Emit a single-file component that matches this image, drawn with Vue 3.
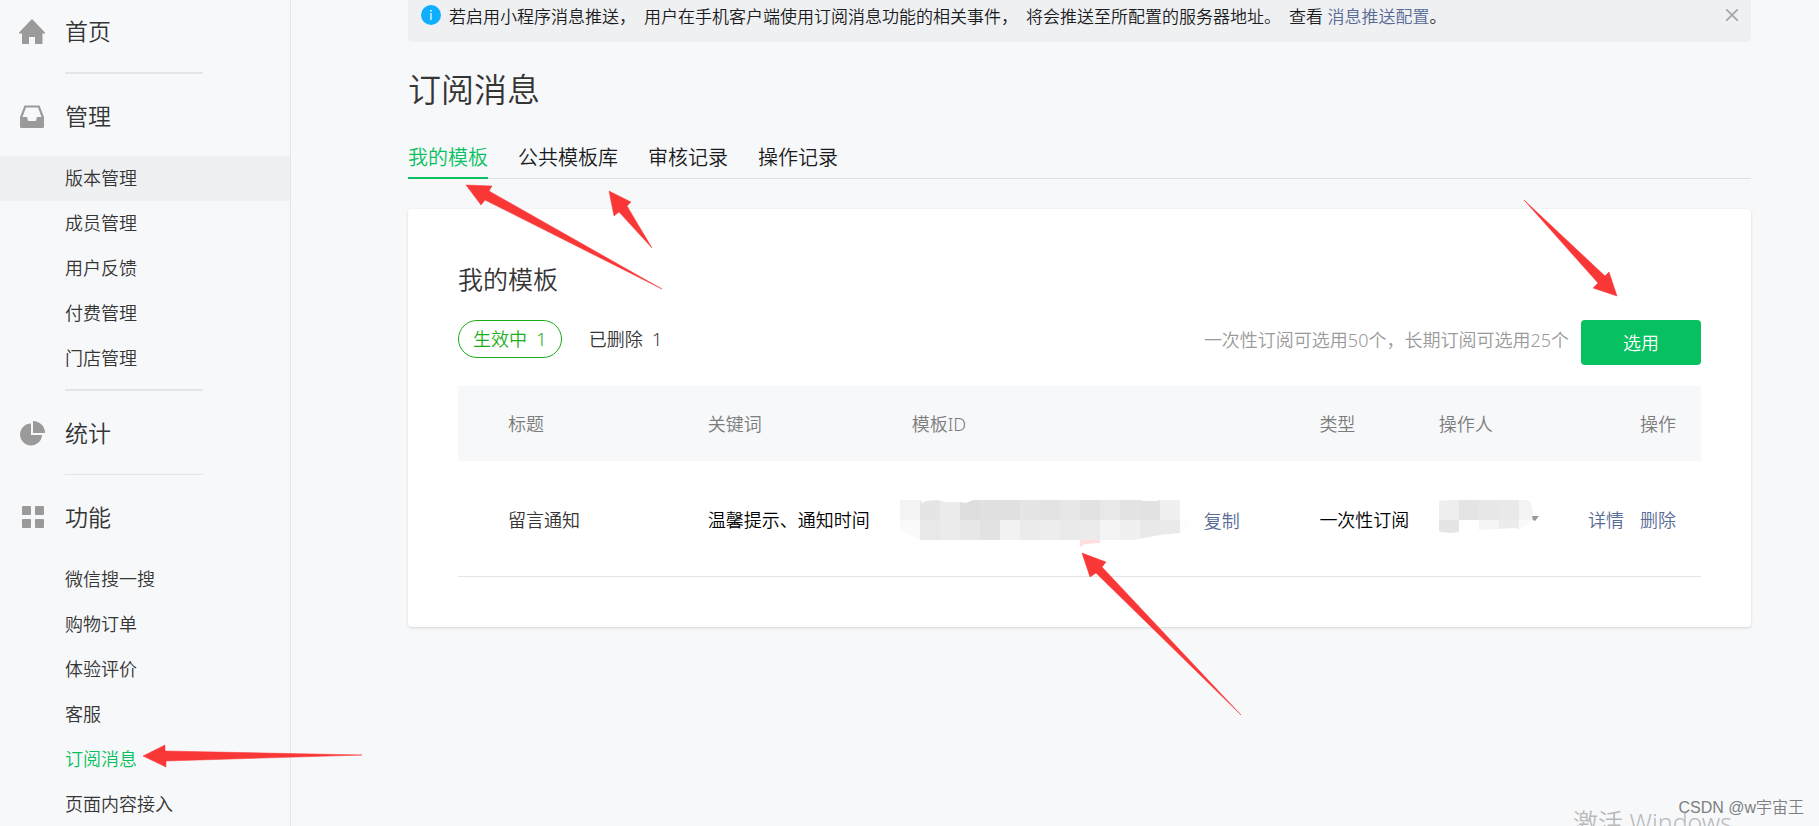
<script setup>
import { ref } from 'vue'

const manageItems = ['版本管理', '成员管理', '用户反馈', '付费管理', '门店管理']
const featureItems = ['微信搜一搜', '购物订单', '体验评价', '客服', '订阅消息', '页面内容接入']
const tabs = ['我的模板', '公共模板库', '审核记录', '操作记录']
const activeTab = ref('我的模板')

// Grey levels of the two rows of tiles over the obscured template ID
const rowOne = [243, 229, 235, 222, 225, 224, 229, 227, 231, 226, 232, 227, 226, 240]
const rowTwo = [250, 232, 235, 231, 226, 242, 235, 237, 234, 235, 244, 240, 233, 234]
const idTiles = [
  ...rowOne.map((g, i) => ({ x: i * 20, y: 0, g })),
  ...rowTwo.map((g, i) => ({ x: i * 20, y: 20, g })),
]
const grey = (g) => `rgb(${g},${g},${g})`

const arrows = [
  '466,185 492,186 489,191 662,289 485,200 481,205',
  '609,191 631,202 627,206 652,248 619,212 614,216',
  '1617,296 1609,272 1605,276 1524,200 1598,283 1593,288',
  '1082,553 1106,562 1102,567 1241,715 1096,573 1090,577',
  '143,756 165,745 165,751 362,755 166,761 166,767',
]
</script>

<template>
  <div class="shell">
    <aside class="sidebar">
      <nav class="nav">
        <a class="head" href="#">
          <svg class="icon" viewBox="0 0 26 26"><path fill="#9a9a9a" d="M13 1 26 14.500V15.500H23.500V26H16V19H10V26H3V15.500H0V14.500Z" /></svg>
          首页
        </a>
        <hr class="rule tight" />
        <a class="head" href="#">
          <svg class="icon" viewBox="0 0 26 26"><path fill="#9a9a9a" fill-rule="evenodd" d="M5.500 2.500H20.500L25 14V23.500Q25 25 23.500 25H2.500Q1 25 1 23.500V14ZM7 4.500 3.500 14H8L9 18H17L18 14H22.500L19 4.500Z" /></svg>
          管理
        </a>
        <a v-for="(item, i) in manageItems" :key="item" href="#" class="item" :class="{ hover: i === 0 }">{{ item }}</a>
        <hr class="rule" />
        <a class="head" href="#">
          <svg class="icon" viewBox="0 0 26 26"><path fill="#9a9a9a" d="M12 3.500V15H23A11 11 0 1 1 12 3.500ZM14 1A12 12 0 0 1 26 13H14Z" /></svg>
          统计
        </a>
        <hr class="rule tight thin" />
        <a class="head" href="#">
          <svg class="icon" viewBox="0 0 26 26"><g fill="#9a9a9a"><rect x="3" y="2" width="9" height="9" rx="1" /><rect x="16" y="2" width="9" height="9" rx="1" /><rect x="3" y="15" width="9" height="9" rx="1" /><rect x="16" y="15" width="9" height="9" rx="1" /></g></svg>
          功能
        </a>
        <a v-for="item in featureItems" :key="item" href="#" class="item" :class="{ current: item === '订阅消息' }">{{ item }}</a>
      </nav>
    </aside>

    <main class="main">
      <div class="notice">
        <svg class="info" viewBox="0 0 20 20"><circle cx="10" cy="10" r="10" fill="#10aeff" /><path fill="#fff" d="M9.400 8h1.200v7H9.400zM9.200 5h1.600v1.600H9.200z" /></svg>
        <p class="notice-text">
          <span>若启用小程序消息推送，</span>
          <span>用户在手机客户端使用订阅消息功能的相关事件，</span>
          <span>将会推送至所配置的服务器地址。</span>
          <span>查看 <a class="link" href="#">消息推送配置</a>。</span>
        </p>
        <button class="close" type="button" aria-label="关闭">
          <svg viewBox="0 0 12 12"><path d="M0 0 12 12M12 0 0 12" stroke="#a3a4a6" stroke-width="1.600" /></svg>
        </button>
      </div>

      <h1 class="title">订阅消息</h1>

      <div class="tabs">
        <button v-for="tab in tabs" :key="tab" type="button" class="tab" :class="{ active: tab === activeTab }" @click="activeTab = tab">{{ tab }}</button>
      </div>

      <section class="card">
        <h2 class="subtitle">我的模板</h2>
        <div class="toolbar">
          <button type="button" class="pill on">生效中&nbsp; 1</button>
          <button type="button" class="pill">已删除&nbsp; 1</button>
          <span class="hint">一次性订阅可选用50个，长期订阅可选用25个</span>
          <button type="button" class="primary">选用</button>
        </div>

        <table class="table">
          <colgroup>
            <col class="c-title" /><col class="c-words" /><col class="c-id" /><col class="c-type" /><col /><col />
          </colgroup>
          <thead>
            <tr><th>标题</th><th>关键词</th><th>模板ID</th><th>类型</th><th>操作人</th><th>操作</th></tr>
          </thead>
          <tbody>
            <tr>
              <td>留言通知</td>
              <td class="strong">温馨提示、通知时间</td>
              <td>
                <div class="id-cell">
                  <svg class="id-mask" viewBox="0 0 292 48">
                    <clipPath id="id-shape"><path d="M1 0H20L23 3 26 1 37 0 45 2 60 2 66 3 73 0H240L244 1H258V0H279L280 1V33L260 35 234 40H20L0 30V1Z" /></clipPath>
                    <path d="M280 20h12q-1 8-12 12z" fill="#fdfdfd" />
                    <g clip-path="url(#id-shape)" shape-rendering="crispEdges">
                      <rect v-for="t in idTiles" :key="`${t.x}-${t.y}`" :x="t.x" :y="t.y" width="20" height="20" :fill="grey(t.g)" />
                    </g>
                    <path d="M180 40h20v3l-15 1-3 2-2 1z" fill="#ffdedd" />
                  </svg>
                  <a class="link" href="#">复制</a>
                </div>
              </td>
              <td class="strong">一次性订阅</td>
              <td>
                <svg class="user-mask" viewBox="0 0 102 40">
                  <path d="M0 1 12 0H20V20H0Z" fill="#eee" />
                  <path d="M0 20h20v12l-8 1-10-1-2-1z" fill="#e5e5e5" />
                  <path d="M20 0h20v20H20z" fill="#e4e4e4" />
                  <path d="M40 0h20v20H40z" fill="#e7e7e7" />
                  <path d="M60 0h20v20H60z" fill="#e9e9e9" />
                  <path d="M80 0h9q4 3 5 12v8H80z" fill="#f3f3f3" />
                  <path d="M40 20h20v9l-20 1z" fill="#f5f5f5" />
                  <path d="M60 20h20v9l-5-1-15 1z" fill="#ececec" />
                  <path d="M80 20h13q-4 6-13 9z" fill="#fafafa" />
                  <path d="M93 16h7l-4 5-2-1z" fill="#999" />
                </svg>
              </td>
              <td class="actions"><a class="link" href="#">详情</a><a class="link" href="#">删除</a></td>
            </tr>
          </tbody>
        </table>
      </section>
    </main>

    <svg class="marks" width="1819" height="826" aria-hidden="true">
      <polygon v-for="points in arrows" :key="points" :points="points" fill="#fa3737" stroke="#fa3737" stroke-width="0.500" />
    </svg>
    <div class="activate">激活 Windows</div>
    <div class="credit">CSDN @w宇宙王</div>
  </div>
</template>

<style>
body {
  margin: 0;
  background: #f7f8fa;
}
</style>

<style scoped>
.shell {
  position: relative;
  display: flex;
  height: 100vh;
  overflow: hidden;
  background: #f7f8fa;
  color: #353535;
  font-family: "Noto Sans", "Noto Sans CJK SC", sans-serif;
  font-size: 18px;
  font-weight: 350;
  line-height: 24px;
}
a {
  color: inherit;
  text-decoration: none;
}
button {
  margin: 0;
  padding: 0;
  border: 0;
  background: none;
  color: inherit;
  font: inherit;
  cursor: pointer;
}
.sidebar {
  flex: none;
  width: 290px;
  border-right: 1px solid #e4e5e7;
}
.nav {
  margin-top: -7px;
}
.head {
  display: flex;
  align-items: center;
  gap: 20px;
  height: 76px;
  padding: 0 0 2px 19px;
  font-size: 23px;
}
.icon {
  flex: none;
  width: 26px;
  height: 26px;
}
.rule {
  width: 138px;
  height: 2px;
  margin: 8px 0 4px 65px;
  border: 0;
  background: #e4e5e7;
}
.rule.tight {
  margin-top: 1px;
}
.rule.thin {
  height: 1px;
}
.item {
  display: block;
  padding-left: 65px;
  line-height: 45px;
}
.item.hover {
  background: #eff0f2;
}
.item.current {
  color: #07c160;
}
.link {
  color: #576b95;
}
.main {
  flex: 1;
  min-width: 0;
  padding: 0 68px 0 117px;
}
.notice {
  display: flex;
  align-items: flex-start;
  height: 37px;
  padding: 5px 13px 0;
  border-radius: 0 0 4px 4px;
  background: #eff0f2;
  color: #1a1b1c;
  font-size: 17px;
}
.info {
  flex: none;
  width: 20px;
  height: 20px;
}
.notice-text {
  display: flex;
  flex: 1;
  gap: 8px;
  margin: 0 0 0 8px;
  white-space: nowrap;
}
.close {
  display: flex;
  padding: 4px 0;
}
.close svg {
  width: 12px;
  height: 12px;
}
.title {
  margin: 24px 0 0;
  font-size: 33px;
  font-weight: inherit;
  line-height: 48px;
}
.tabs {
  display: flex;
  gap: 30px;
  margin-top: 24px;
  border-bottom: 1px solid #dfe0e3;
  color: #1a1b1c;
  font-size: 20px;
}
.tab {
  height: 41px;
  margin-bottom: -1px;
  border-bottom: 2px solid transparent;
}
.tab.active {
  border-color: #07c160;
  color: #07c160;
}
.card {
  margin-top: 30px;
  padding: 50px;
  border-radius: 4px;
  background: #fff;
  box-shadow: 0 1px 3px rgba(0, 0, 0, 0.14);
}
.subtitle {
  margin: 0;
  font-size: 25px;
  font-weight: inherit;
  line-height: 40px;
}
.toolbar {
  display: flex;
  align-items: flex-start;
  margin-top: 21px;
}
.pill {
  height: 38px;
  padding: 0 14px;
  border: 1px solid transparent;
  border-radius: 19px;
}
.pill.on {
  margin-right: 12px;
  border-color: #1aad19;
  color: #1aad19;
}
.hint {
  margin-left: auto;
  color: #9a9a9a;
  line-height: 40px;
}
.primary {
  width: 120px;
  height: 45px;
  margin-left: 12px;
  border-radius: 4px;
  background: #07c160;
  color: #fff;
}
.table {
  width: 100%;
  margin-top: 21px;
  border-collapse: collapse;
  table-layout: fixed;
}
.c-title {
  width: 20.1%;
}
.c-words {
  width: 16.4%;
}
.c-id {
  width: 32.8%;
}
.c-type {
  width: 9.6%;
}
th,
td {
  padding: 0;
  font-weight: inherit;
  text-align: left;
  white-space: nowrap;
}
th {
  height: 75px;
  background: #f7f8fa;
  color: #7c7c7c;
}
td {
  height: 113px;
  padding-top: 2px;
  border-bottom: 1px solid #e4e5e7;
}
th:first-child,
td:first-child {
  padding-left: 50px;
}
th:last-child,
td:last-child {
  padding-right: 25px;
  text-align: right;
}
.strong {
  color: #000;
}
.id-cell {
  display: flex;
  align-items: center;
  gap: 12px;
  margin-left: -12px;
}
.id-mask {
  flex: none;
  width: 292px;
  height: 48px;
  margin-top: 8px;
}
.id-cell .link {
  margin-top: 2px;
}
.user-mask {
  display: block;
  width: 102px;
  height: 40px;
}
.actions .link + .link {
  margin-left: 16px;
}
.marks {
  position: absolute;
  top: 0;
  left: 0;
  pointer-events: none;
}
.activate {
  position: absolute;
  right: 87px;
  bottom: -14px;
  color: #b9babb;
  font-size: 25px;
  line-height: 36px;
}
.credit {
  position: absolute;
  right: 15px;
  bottom: 6px;
  color: #7d7e80;
  font-family: "Liberation Sans", "Noto Sans CJK SC", sans-serif;
  font-size: 16px;
}
</style>
